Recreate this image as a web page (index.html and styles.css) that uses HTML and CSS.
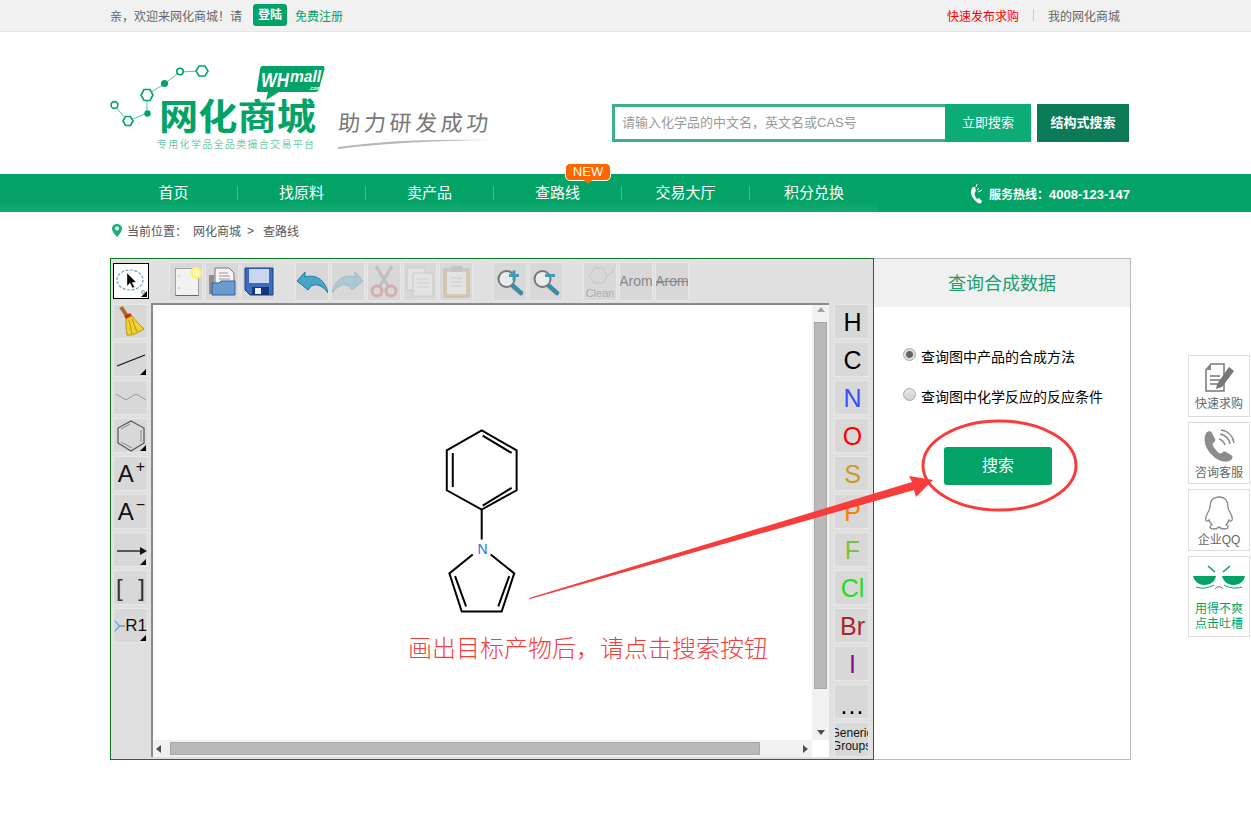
FILE: index.html

```html
<!DOCTYPE html>
<html lang="zh-CN">
<head>
  <meta charset="UTF-8" />
  <title>查路线 - 网化商城</title>
  <link rel="stylesheet" href="styles.css">
</head>
<body>
  <div class="topbar">
    <div class="wrap topbar-in">
      <span class="hello">亲，欢迎来网化商城！请</span>
      <a class="login">登陆</a>
      <a class="reg">免费注册</a>
      <a class="quick">快速发布求购</a>
      <i class="topline"></i>
      <a class="mine">我的网化商城</a>
    </div>
  </div>

  <div class="wrap header">
    <svg class="logo" width="385" height="92" viewBox="110 62 385 92">
      <g stroke="#5cc19c" stroke-width="1" fill="none">
        <path d="M114 105 L128 121 L147 113 L147 95 L164 84 L180 72 L201 71" />
      </g>
      <g fill="#fff" stroke="#03a367" stroke-width="1.6">
        <path d="M196 71 l3 -5 h6 l3 5 l-3 5 h-6z" />
        <circle cx="180" cy="71.500" r="3.200" />
        <path d="M141 95 l3 -5.500 h6 l3 5.500 l-3 5.500 h-6z" />
        <path d="M123 121 l2.500 -4.500 h5 l2.500 4.500 l-2.500 4.500 h-5z" />
        <circle cx="114.500" cy="105" r="3.400" />
      </g>
      <circle cx="164.500" cy="83.500" r="3.600" fill="#03a367" />
      <circle cx="147.500" cy="113.500" r="3.200" fill="#03a367" />
      <path d="M262 66 H323 Q325 66 324.500 69 L319 89 Q318 92 315 92 H279 L266 100 L268 92 H259 Q256 92 257 89 L260 69 Q260.500 66 262 66z" fill="#03a367" />
      <text x="261" y="87" class="logo-wh" textLength="28" lengthAdjust="spacingAndGlyphs">WH</text>
      <text x="290" y="82" class="logo-mall" textLength="31" lengthAdjust="spacingAndGlyphs">mall</text>
      <text x="309" y="90" class="logo-com">.com</text>
      <text x="159" y="130" class="logo-name" textLength="157" lengthAdjust="spacingAndGlyphs">网化商城</text>
      <text x="157" y="147.500" class="logo-sub" textLength="157">专用化学品全品类撮合交易平台</text>
      <text x="338" y="131" class="slogan" textLength="150" transform="translate(9 0) skewX(-4)">助力研发成功</text>
      <path d="M338 147 Q400 138 492 140 Q400 141 338 149z" fill="#b5b5b5" />
    </svg>
    <div class="search">
      <div class="search-box">请输入化学品的中文名，英文名或CAS号</div>
      <a class="search-go">立即搜索</a>
      <a class="search-mol">结构式搜索</a>
    </div>
  </div>

  <div class="nav">
    <div class="wrap nav-in">
      <a class="nav-item">首页</a>
      <a class="nav-item">找原料</a>
      <a class="nav-item">卖产品</a>
      <a class="nav-item nav-new">查路线<b class="new-badge">NEW</b></a>
      <a class="nav-item">交易大厅</a>
      <a class="nav-item nav-last">积分兑换</a>
      <div class="hotline">
        <svg width="15" height="21" viewBox="0 0 15 21">
          <path d="M5 4 C1 8 3 15 10 20 C12 21 14 20 14 18 L11 15 L9 16 C7 14 6 11 7 9 L8 8 L7 4z" fill="#fff" />
          <path d="M9 7 L11 5 M10 9 L14 7 M8 4 L9 1" stroke="#fff" stroke-width="1" />
        </svg>
        <span>服务热线：<em class="tel">4008-123-147</em></span>
      </div>
    </div>
  </div>

  <div class="wrap crumb">
    <svg width="12" height="15" viewBox="0 0 12 15">
      <path d="M6 1 C2.800 1 1 3.200 1 5.700 C1 9 6 14 6 14 C6 14 11 9 11 5.700 C11 3.200 9.200 1 6 1z" fill="#1fae80" />
      <circle cx="6" cy="5.500" r="2" fill="#fff" />
    </svg>
    <span class="crumb-now">当前位置：</span>
    <a>网化商城</a><span class="crumb-sep">&gt;</span><a>查路线</a>
  </div>

  <div class="wrap main">
    <div class="editor">
      <div class="tools-top">
        <div class="btn btn-on more">
          <svg width="32" height="32" viewBox="0 0 32 32">
            <ellipse cx="15" cy="15" rx="13" ry="10" fill="none" stroke="#6f9fcc" stroke-width="1.200" stroke-dasharray="3 1.500" />
            <path d="M12 8 V21 L15 18 L17.500 23 L19.500 22 L17 17.500 L21 17z" fill="#000" stroke="#ccc" stroke-width=".5" />
            <circle cx="28" cy="27" r="1.500" fill="none" stroke="#6f9fcc" />
          </svg>
        </div>
        <div class="btn-group">
          <div class="btn">
            <svg width="32" height="36" viewBox="0 0 32 36">
              <rect x="5.500" y="5.500" width="23" height="27" fill="#f2f2f2" stroke="#a0a0a0" />
              <path d="M5.500 32.500 H28.500" stroke="#666" />
              <circle cx="9" cy="13" r=".7" fill="#999" />
              <circle cx="9" cy="25" r=".7" fill="#999" />
              <circle cx="26" cy="10" r="6" fill="#fff27a" />
              <circle cx="26" cy="10" r="3" fill="#fffbd0" />
            </svg>
          </div>
          <div class="btn">
            <svg width="32" height="36" viewBox="0 0 32 36">
              <path d="M3 12 H8 V31 H3z" fill="#8d8d8d" />
              <path d="M9 5 H23 L28 10 V22 H9z" fill="#f4f4f4" stroke="#777" />
              <path d="M13 10 H22 M13 13 H24 M13 16 H24" stroke="#999" />
              <path d="M6 20 H13 L15 18 H29 V32 H6z" fill="#6a9bcf" stroke="#2d5f9e" />
            </svg>
          </div>
          <div class="btn">
            <svg width="32" height="36" viewBox="0 0 32 36">
              <path d="M3 5 H31 V32 H8 L3 27z" fill="#3c6cc0" stroke="#1c3f88" />
              <rect x="7" y="6" width="20" height="14" fill="#c9d8f0" />
              <rect x="10" y="24" width="17" height="8" fill="#14357c" />
              <rect x="13" y="25" width="6" height="6" fill="#eef2f8" />
            </svg>
          </div>
        </div>
        <div class="btn-group">
          <div class="btn">
            <svg width="32" height="36" viewBox="0 0 32 36">
              <path d="M1 18 L9 9 V14 C19 11 29 16 32 30 C27 23 21 20 15 23 L12 27z" fill="#45a6c8" stroke="#23799c" />
            </svg>
          </div>
          <div class="btn off">
            <svg width="32" height="36" viewBox="0 0 32 36">
              <path d="M31 18 L23 9 V14 C13 11 3 16 0 30 C5 23 11 20 17 23 L20 27z" fill="#45a6c8" stroke="#23799c" />
            </svg>
          </div>
          <div class="btn off">
            <svg width="32" height="36" viewBox="0 0 32 36">
              <path d="M8 3 L20 23 M24 3 L12 23" stroke="#888" stroke-width="3" fill="none" />
              <circle cx="9" cy="28" r="5" fill="none" stroke="#d9474d" stroke-width="3" />
              <circle cx="23" cy="28" r="5" fill="none" stroke="#d9474d" stroke-width="3" />
            </svg>
          </div>
          <div class="btn off">
            <svg width="32" height="36" viewBox="0 0 32 36">
              <rect x="3" y="5" width="18" height="22" fill="#fff" stroke="#aaa" />
              <path d="M9 10 H29 V33 H9z" fill="#fff" stroke="#aaa" />
              <path d="M13 16 H25 M13 20 H25 M13 24 H25" stroke="#bbb" />
            </svg>
          </div>
          <div class="btn off">
            <svg width="32" height="36" viewBox="0 0 32 36">
              <rect x="4" y="6" width="25" height="28" fill="#d3a765" stroke="#a37b42" />
              <rect x="7" y="9" width="19" height="22" fill="#fff" />
              <rect x="11" y="3" width="11" height="6" fill="#999" />
              <path d="M11 15 H22 M11 19 H22 M11 23 H22" stroke="#aaa" />
            </svg>
          </div>
        </div>
        <div class="btn-group">
          <div class="btn">
            <svg width="32" height="36" viewBox="0 0 32 36">
              <circle cx="12.500" cy="16" r="8" fill="#e8ecee" stroke="#777" stroke-width="2" />
              <path d="M19 23 L27 30" stroke="#3f8ba4" stroke-width="4.500" stroke-linecap="round" />
              <path d="M15 12.500 H25 M20 7.500 V17.500" stroke="#3f9bb8" stroke-width="3" />
            </svg>
          </div>
          <div class="btn">
            <svg width="32" height="36" viewBox="0 0 32 36">
              <circle cx="12.500" cy="16" r="8" fill="#e8ecee" stroke="#777" stroke-width="2" />
              <path d="M19 23 L27 30" stroke="#3f8ba4" stroke-width="4.500" stroke-linecap="round" />
              <path d="M15 12.500 H25" stroke="#3f9bb8" stroke-width="3" />
            </svg>
          </div>
        </div>
        <div class="btn-group">
          <div class="btn btn-clean">
            <svg width="32" height="24" viewBox="0 0 32 24">
              <path d="M5 12 L10 4 H19 L23 12 L19 19 H10z" fill="none" stroke="#c4c4c4" />
              <path d="M23 12 L29 8 M29 8 V3" stroke="#c4c4c4" fill="none" />
            </svg>
            <span>Clean</span>
          </div>
          <div class="btn btn-text">Arom</div>
          <div class="btn btn-text btn-strike">Arom</div>
        </div>
      </div>

      <div class="editor-body">
        <div class="tools-left">
          <div class="btn">
            <svg width="33" height="33" viewBox="0 0 33 33">
              <path d="M7 2 L13 11" stroke="#a8702c" stroke-width="4" />
              <path d="M10 11 L16 8 L18 11 L12 14z" fill="#d02828" />
              <path d="M12 14 L18 11 C22 16 26 20 30 24 C24 28 17 31 13 30 C12 24 12 18 12 14z" fill="#f2d02e" stroke="#b8951a" />
              <path d="M15 15 L18 29 M18 14 L23 27" stroke="#b8951a" />
            </svg>
          </div>
          <div class="btn more">
            <svg width="33" height="33" viewBox="0 0 33 33"><path d="M3 23 L31 12" stroke="#111" stroke-width="1.300" /></svg>
          </div>
          <div class="btn">
            <svg width="33" height="33" viewBox="0 0 33 33"><path d="M2 13 L12 19 L22 13 L32 19" fill="none" stroke="#999" /></svg>
          </div>
          <div class="btn more">
            <svg width="33" height="33" viewBox="0 0 33 33">
              <path d="M17 2 L30 9 V24 L17 32 L4 24 V9z" fill="none" stroke="#555" stroke-width="1.200" />
              <path d="M27 11 V23 M18 29 L7 23 M7 10 L16 5" fill="none" stroke="#999" stroke-width="1.200" />
            </svg>
          </div>
          <div class="btn btn-atom">A<sup>+</sup></div>
          <div class="btn btn-atom">A<sup>−</sup></div>
          <div class="btn more">
            <svg width="33" height="33" viewBox="0 0 33 33">
              <path d="M3 18 H30" stroke="#111" stroke-width="1.300" />
              <path d="M26 14 L33 18 L26 22z" fill="#111" />
            </svg>
          </div>
          <div class="btn btn-bracket">[ ]</div>
          <div class="btn more btn-r">
            <svg width="17" height="20" viewBox="0 0 17 20">
              <path d="M1 2 L8 10 L1 18" fill="none" stroke="#4da3d8" stroke-width="1.600" />
              <path d="M8 10 H17" fill="none" stroke="#3b7ea8" stroke-width="1.600" />
            </svg>
            <span>R1</span>
          </div>
        </div>

        <div class="canvas">
          <div class="canvas-row">
            <div class="draw">
              <svg class="mol" viewBox="153 305 659 436">
                <g fill="none" stroke="#000" stroke-width="2">
                  <path d="M481.700 430.700 L516.700 450.700 V490.700 L481.700 510 L446.700 490.700 V450.700z" />
                  <path d="M482.700 436 L511.700 453.300 M452.700 453.300 V487.300 M511.700 488.300 L482.700 506" />
                  <path d="M481.700 510 V540" />
                  <path d="M472.700 555 L449.300 574 L461.700 612.300 H501.700 L514.300 574 L490.700 555" />
                  <path d="M455 576.700 L466 607 M509.300 576.700 L498.300 607" />
                </g>
                <text x="482.500" y="555" class="mol-n">N</text>
              </svg>
            </div>
            <div class="vbar">
              <i class="up"></i>
              <b class="vthumb"></b>
              <i class="down"></i>
            </div>
          </div>
          <div class="hbar">
            <i class="left"></i>
            <b class="hthumb"></b>
            <i class="right"></i>
          </div>
        </div>

        <div class="tools-right">
          <div class="btn el">H</div>
          <div class="btn el">C</div>
          <div class="btn el el-n">N</div>
          <div class="btn el el-o">O</div>
          <div class="btn el el-s">S</div>
          <div class="btn el el-p">P</div>
          <div class="btn el el-f">F</div>
          <div class="btn el el-cl">Cl</div>
          <div class="btn el el-br">Br</div>
          <div class="btn el el-i">I</div>
          <div class="btn el el-more">...</div>
          <div class="btn el-gen"><span>Generic Groups</span></div>
        </div>
      </div>
    </div>

    <div class="panel">
      <div class="panel-head">查询合成数据</div>
      <div class="panel-body">
        <label class="opt"><i class="radio radio-on"></i>查询图中产品的合成方法</label>
        <label class="opt"><i class="radio"></i>查询图中化学反应的反应条件</label>
        <a class="go">搜索</a>
      </div>
    </div>

    <svg class="notes" viewBox="110 258 1021 502">
      <polygon points="529,598 912,482 909,476 933,480 916,497 914,490 530,599" fill="#f83c3c" />
      <ellipse cx="999.500" cy="465.500" rx="76.500" ry="44.500" fill="none" stroke="#f83c3c" stroke-width="3" />
      <text x="408" y="657" class="note-text">画出目标产物后，请点击搜索按钮</text>
    </svg>
  </div>

  <div class="side">
    <a class="side-item">
      <svg width="32" height="32" viewBox="0 0 32 32">
        <path d="M8 2 H21 V29 H3 V8z" fill="#fff" stroke="#777" stroke-width="1.500" />
        <path d="M8 2 V8 H3z" fill="#888" />
        <path d="M7 14 H17 M7 18 H17 M7 22 H14" stroke="#777" stroke-width="1.500" />
        <path d="M14 22 L26 5 L31 9 L19 25 L13 27z" fill="#777" />
      </svg>
      <span>快速求购</span>
    </a>
    <a class="side-item">
      <svg width="32" height="34" viewBox="0 0 32 34">
        <path d="M4 3 C-1 9 2 20 10 27 C16 33 24 34 28 31 C30 29 30 27 28 26 L23 23 C21 22 20 23 19 24 C17 25 15 24 13 21 C10 18 9 15 10 14 C12 13 13 11 12 10 L9 4 C8 2 6 2 4 3z" fill="#8c8c8c" />
        <path d="M16 10 C19 11 21 13 22 16 M17 5 C22 6 26 10 27 15 M18 1 C25 2 30 7 31 14" fill="none" stroke="#8c8c8c" stroke-width="1.600" />
      </svg>
      <span>咨询客服</span>
    </a>
    <a class="side-item">
      <svg width="30" height="34" viewBox="0 0 30 34">
        <path d="M15 1 C8 1 6 6 6 11 C6 14 3 17 2 21 C1 25 3 26 5 24 C6 27 7 28 8 29 C5 30 5 33 10 33 C13 33 14 32 15 31 C16 32 17 33 20 33 C25 33 25 30 22 29 C23 28 24 27 25 24 C27 26 29 25 28 21 C27 17 24 14 24 11 C24 6 22 1 15 1z" fill="#fff" stroke="#888" stroke-width="1.300" />
      </svg>
      <span>企业QQ</span>
    </a>
    <a class="side-item side-fun">
      <svg width="54" height="26" viewBox="0 0 54 26">
        <path d="M1 13 H24 C23 19 18 22 12 22 C7 22 2 18 1 13z M30 13 H53 C52 19 47 22 41 22 C36 22 31 18 30 13z" fill="#03a367" />
        <path d="M4 24 C10 26 17 25 22 22 M32 22 C37 25 44 26 50 24" fill="none" stroke="#03a367" />
        <path d="M16 3 L23 9 M38 3 L31 9" stroke="#03a367" stroke-width="1.600" />
        <path d="M23 26 C25 23 29 23 31 26" fill="none" stroke="#777" />
      </svg>
      <span>用得不爽<br>点击吐槽</span>
    </a>
  </div>
</body>
</html>
```

FILE: styles.css

```css
* {
  box-sizing: border-box;
}
body {
  margin: 0;
  font-family: "Liberation Sans", "Noto Sans CJK SC", sans-serif;
  font-size: 12px;
  color: #666;
  background-color: #fff;
  position: relative;
  height: 815px;
  overflow: hidden;
}
.wrap {
  width: 1020px;
  margin-left: 110px;
}

/* top bar */
.topbar {
  height: 32px;
  background-color: #f1f1f1;
  border-bottom: 1px solid #e4e4e4;
}
.topbar-in {
  display: flex;
  align-items: center;
  height: 31px;
  padding-bottom: 1px;
}
.login {
  margin-left: 11px;
  width: 34px;
  height: 22px;
  line-height: 23px;
  text-align: center;
  color: #fff;
  font-weight: bold;
  background-color: #03a367;
  border-radius: 3px;
}
.reg {
  margin-left: 8px;
  color: #03a367;
}
.quick {
  margin-left: auto;
  color: #f00;
}
.topline {
  width: 1px;
  height: 12px;
  margin: 0 14px;
  background-color: #ccc;
}
.mine {
  margin-right: 10px;
}

/* logo and search */
.header {
  display: flex;
  align-items: flex-start;
  height: 142px;
}
.logo {
  margin-top: 30px;
  flex: none;
}
.logo-wh {
  font: italic bold 21px "Liberation Sans", sans-serif;
  fill: #fff;
}
.logo-mall {
  font: italic bold 16px "Liberation Sans", sans-serif;
  fill: #fff;
}
.logo-com {
  font: italic bold 5px "Liberation Sans", sans-serif;
  fill: #fff;
}
.logo-name {
  font: bold 36px "Noto Sans CJK SC", sans-serif;
  fill: #03a367;
}
.logo-sub {
  font: 10px "Noto Sans CJK SC", sans-serif;
  fill: #72c9a8;
}
.slogan {
  font: 22px "Noto Sans CJK SC", sans-serif;
  fill: #777;
}
.search {
  display: flex;
  margin-left: auto;
  margin-top: 72px;
  height: 38px;
}
.search-box {
  width: 333px;
  padding-left: 7px;
  line-height: 32px;
  font-size: 13px;
  color: #999;
  border: 3px solid #3db08a;
  border-right: 0;
}
.search-go {
  width: 86px;
  line-height: 38px;
  text-align: center;
  font-size: 13px;
  color: #fff;
  background-color: #0dab76;
}
.search-mol {
  width: 92px;
  margin-left: 6px;
  margin-right: 1px;
  line-height: 38px;
  text-align: center;
  font-size: 13px;
  font-weight: bold;
  color: #fff;
  background-color: #0c7a56;
}

/* nav */
.nav {
  position: relative;
  height: 38px;
  background-color: #03a367;
}
.nav::before {
  content: "";
  position: absolute;
  left: 0;
  bottom: 0;
  width: 878px;
  height: 12px;
  background: linear-gradient(rgba(255, 255, 255, 0), rgba(255, 255, 255, 0.07));
}
.nav-in {
  position: relative;
  display: flex;
  align-items: center;
  height: 38px;
}
.nav-item {
  position: relative;
  width: 128px;
  height: 14px;
  line-height: 14px;
  text-align: center;
  font-size: 15px;
  color: #fff;
  border-right: 1px solid rgba(255, 255, 255, 0.25);
}
.nav-last {
  border-right: 0;
}
.new-badge {
  position: absolute;
  left: 71px;
  top: -23px;
  width: 46px;
  height: 18px;
  line-height: 16px;
  font-size: 13px;
  font-weight: normal;
  color: #fff;
  background-color: #f60;
  border: 1px solid #fff;
  border-radius: 5px;
}
.new-badge::after {
  content: "";
  position: absolute;
  left: 18px;
  top: 16px;
  border: 4px solid transparent;
  border-top-color: #f60;
  border-bottom: 0;
}
.hotline {
  display: flex;
  align-items: center;
  gap: 6px;
  margin-left: auto;
  font-weight: bold;
  color: #fff;
  white-space: nowrap;
}
.tel {
  font-style: normal;
  font-size: 13px;
}

/* breadcrumb */
.crumb {
  display: flex;
  align-items: center;
  height: 46px;
  padding-left: 1px;
  padding-bottom: 9px;
  color: #555;
}
.crumb-now {
  margin-left: 4px;
  margin-right: 6px;
}
.crumb-sep {
  margin: 0 9px 0 6px;
}

/* main box */
.main {
  position: relative;
  display: flex;
  width: 1021px;
  height: 502px;
}
.editor {
  width: 764px;
  background-color: #e0e0e0;
  border: 1px solid #0b7a1e;
  display: flex;
  flex-direction: column;
}
.btn {
  position: relative;
  display: flex;
  align-items: center;
  justify-content: center;
  background-color: #d8d8d8;
  border: 1px solid #e7e7e7;
  overflow: hidden;
}
.btn.off svg {
  opacity: 0.3;
}
.more::after {
  content: "";
  position: absolute;
  right: 1px;
  bottom: 1px;
  border: 3px solid transparent;
  border-right-color: #000;
  border-bottom-color: #000;
}
.tools-top {
  display: flex;
  align-items: center;
  height: 44px;
  flex: none;
  padding-left: 2px;
}
.btn-on {
  width: 36px;
  height: 36px;
  background-color: #fff;
  border: 1px solid #000;
}
.btn-group {
  display: flex;
  gap: 2px;
  margin-left: 20px;
}
.btn-group .btn {
  width: 34px;
  height: 39px;
}
.btn-clean {
  flex-direction: column;
  font-size: 11px;
  line-height: 10px;
  color: #aaa;
}
.btn-text {
  font-size: 14px;
  color: #888;
}
.btn-strike {
  text-decoration: line-through;
}
.editor-body {
  flex: 1;
  display: flex;
  min-height: 0;
}
.tools-left {
  width: 40px;
  flex: none;
  padding-left: 2px;
  padding-top: 1px;
}
.tools-left .btn {
  width: 35px;
  height: 35px;
  margin-bottom: 3px;
}
.btn-atom {
  font-size: 24px;
  color: #111;
  padding-left: 2px;
}
.btn-atom sup {
  font-size: 16px;
  line-height: 16px;
  margin-left: 2px;
  margin-top: -13px;
}
.btn-bracket {
  font-size: 24px;
  font-weight: 300;
  color: #333;
  white-space: pre;
  word-spacing: 9px;
}
.btn-r {
  justify-content: flex-start;
  font-size: 17px;
  color: #111;
}
.canvas {
  width: 678px;
  height: 454px;
  flex: none;
  display: flex;
  flex-direction: column;
  background-color: #fff;
  border-top: 2px solid #8a8a8a;
  border-left: 2px solid #8a8a8a;
}
.canvas-row {
  flex: 1;
  display: flex;
  min-height: 0;
}
.draw {
  position: relative;
  flex: 1;
  background-color: #fff;
}
.mol {
  position: absolute;
  left: 0;
  top: 0;
  width: 100%;
  height: 100%;
}
.mol-n {
  font: 14px "Liberation Sans", sans-serif;
  fill: #2a6fe8;
  text-anchor: middle;
}
.vbar {
  width: 17px;
  display: flex;
  flex-direction: column;
  align-items: center;
  background-color: #f1f1f1;
}
.vthumb {
  width: 13px;
  height: 367px;
  margin-top: 10px;
  background-color: #b9b9b9;
  border: 1px solid #a8a8a8;
}
.up,
.down,
.left,
.right {
  width: 0;
  height: 0;
  border: 4px solid transparent;
}
.up {
  margin-top: 2px;
  border-top: 0;
  border-bottom: 5px solid #a3a3a3;
}
.down {
  margin-top: auto;
  margin-bottom: 5px;
  border-bottom: 0;
  border-top: 5px solid #505050;
}
.hbar {
  height: 17px;
  flex: none;
  width: 659px;
  display: flex;
  align-items: center;
  background-color: #f1f1f1;
}
.left {
  margin-left: 3px;
  border-left: 0;
  border-right: 5px solid #505050;
}
.right {
  margin-left: auto;
  margin-right: 4px;
  border-right: 0;
  border-left: 5px solid #505050;
}
.hthumb {
  width: 590px;
  height: 13px;
  margin-left: 9px;
  background-color: #b9b9b9;
  border: 1px solid #a8a8a8;
}
.tools-right {
  flex: 1;
  padding-left: 5px;
  padding-top: 1px;
}
.tools-right .btn {
  width: 35px;
  height: 35px;
  margin-bottom: 3px;
}
.el {
  font-size: 25px;
  color: #000;
  padding-left: 2px;
  padding-top: 1px;
}
.el-n { color: #3a4dff; }
.el-o { color: #f00; }
.el-s { color: #c99a2e; }
.el-p { color: #ff8000; }
.el-f { color: #7ac142; }
.el-cl { color: #1fdf1f; }
.el-br { color: #a52a2a; }
.el-i { color: #940094; }
.el-more {
  align-items: flex-end;
  line-height: 26px;
  letter-spacing: 1px;
}
.el-gen {
  font-size: 12px;
  line-height: 13px;
  color: #111;
}
.el-gen span {
  flex: none;
  width: 46px;
  text-align: center;
}

/* right panel */
.panel {
  width: 257px;
  border: 1px solid #bbb;
  border-left: 0;
}
.panel-head {
  height: 48px;
  line-height: 50px;
  text-align: center;
  font-size: 18px;
  color: #1a9e72;
  background-color: #f0f0f0;
}
.panel-body {
  padding: 29px 0 0 29px;
}
.opt {
  display: flex;
  align-items: center;
  height: 40px;
  font-size: 14px;
  color: #000;
}
.radio {
  width: 13px;
  height: 13px;
  margin-right: 5px;
  border: 1px solid #aaa;
  border-radius: 50%;
  background: linear-gradient(#e8e8e8, #d0d0d0);
  margin-top: -3px;
}
.radio-on {
  background: radial-gradient(circle, #666 0, #666 3px, #ddd 4px);
}
.go {
  display: block;
  width: 108px;
  height: 38px;
  margin-top: 31px;
  margin-left: 41px;
  line-height: 38px;
  text-align: center;
  font-size: 16px;
  color: #fff;
  background-color: #03a367;
  border-radius: 3px;
}
.notes {
  position: absolute;
  left: 0;
  top: 0;
  width: 1021px;
  height: 502px;
  pointer-events: none;
}
.note-text {
  font: 300 24px "Noto Sans CJK SC", sans-serif;
  fill: #f83c3c;
}

/* floating side buttons */
.side {
  position: absolute;
  right: 1px;
  top: 355px;
  display: flex;
  flex-direction: column;
  gap: 5px;
  width: 62px;
}
.side-item {
  display: flex;
  flex-direction: column;
  align-items: center;
  height: 62px;
  padding-top: 6px;
  font-size: 12px;
  line-height: 14px;
  color: #666;
  background-color: #fff;
  border: 1px solid #ddd;
}
.side-item span {
  margin-top: 3px;
  text-align: center;
}
.side-fun {
  height: 81px;
  color: #03a367;
}
.side-fun span {
  line-height: 15px;
  margin-top: 13px;
}
```
